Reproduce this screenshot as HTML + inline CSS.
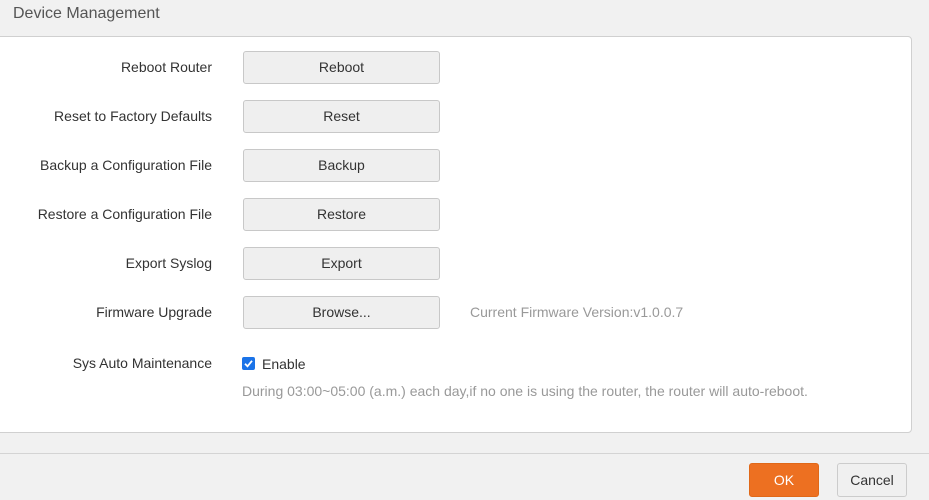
<!DOCTYPE html>
<html><head><style>
body{margin:0;width:929px;height:500px;background:#f1f1f1;font-family:"Liberation Sans",sans-serif;font-size:14px;color:#333;position:relative;overflow:hidden}
.title{position:absolute;left:13px;top:5px;font-size:16px;color:#555}
.panel{position:absolute;left:-6px;top:36px;width:916px;height:395px;background:#fff;border:1px solid #d0d0d0;border-radius:4px}
.lbl{position:absolute;right:717px;text-align:right;white-space:nowrap;line-height:33px}
.btn{position:absolute;left:243px;width:195px;height:31px;border:1px solid #c8c8c8;border-radius:3px;background:#efefef;text-align:center;line-height:31px;color:#333}
.gray{color:#999}
.sep{position:absolute;left:0;top:453px;width:929px;height:1px;background:#d4d4d4}
.ok{position:absolute;left:749px;top:463px;width:68px;height:32px;background:#ed7021;border:1px solid #e06818;border-radius:3px;color:#fff;text-align:center;line-height:32px}
.cancel{position:absolute;left:837px;top:463px;width:68px;height:32px;background:#f0f0f0;border:1px solid #ccc;border-radius:3px;text-align:center;line-height:32px}
</style></head><body>
<div class="title">Device Management</div>
<div class="panel"></div>
<div class="lbl" style="top:51px">Reboot Router</div><div class="btn" style="top:51px">Reboot</div>
<div class="lbl" style="top:100px">Reset to Factory Defaults</div><div class="btn" style="top:100px">Reset</div>
<div class="lbl" style="top:149px">Backup a Configuration File</div><div class="btn" style="top:149px">Backup</div>
<div class="lbl" style="top:198px">Restore a Configuration File</div><div class="btn" style="top:198px">Restore</div>
<div class="lbl" style="top:247px">Export Syslog</div><div class="btn" style="top:247px">Export</div>
<div class="lbl" style="top:296px">Firmware Upgrade</div><div class="btn" style="top:296px">Browse...</div>
<div class="gray" style="position:absolute;left:470px;top:304px">Current Firmware Version:v1.0.0.7</div>
<div class="lbl" style="top:347px">Sys Auto Maintenance</div>
<svg style="position:absolute;left:242px;top:357px" width="13" height="13"><rect x="0" y="0" width="13" height="13" rx="2" fill="#1a73e8"/><path d="M3 6.8 L5.5 9.3 L10 3.8" stroke="#fff" stroke-width="1.8" fill="none"/></svg>
<div style="position:absolute;left:262px;top:356px">Enable</div>
<div class="gray" style="position:absolute;left:242px;top:383px">During 03:00~05:00 (a.m.) each day,if no one is using the router, the router will auto-reboot.</div>
<div class="sep"></div>
<div class="ok">OK</div>
<div class="cancel">Cancel</div>
</body></html>
